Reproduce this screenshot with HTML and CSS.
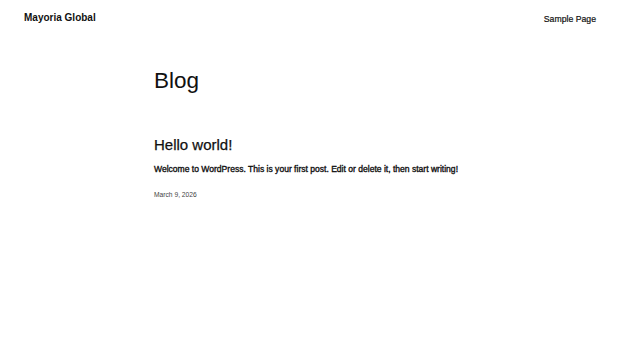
FILE: index.html
```html
<!DOCTYPE html>
<html lang="en">

<head>
    <meta charset="UTF-8">
    <title>Blog – Mayoria Global</title>
    <link rel="stylesheet" href="styles.css">
</head>

<body>

    <header class="site-header">
        <a class="site-title" href="#">Mayoria Global</a>
        <nav class="site-nav">
            <a href="#">Sample Page</a>
        </nav>
    </header>

    <main class="site-main">
        <h1 class="page-title">Blog</h1>

        <article class="post">
            <h2 class="post-title"><a href="#">Hello world!</a></h2>
            <p class="post-excerpt">Welcome to WordPress. This is your first post. Edit or delete it, then start writing!</p>
            <p class="post-date">March 9, 2026</p>
        </article>
    </main>

</body>

</html>
```

FILE: styles.css
```css
body {
    margin: 0;
    font-family: "Liberation Sans", Arial, sans-serif;
    color: #111;
    background: #fff;
}

a {
    color: inherit;
    text-decoration: none;
}

/* 顶部栏 */
.site-header {
    display: flex;
    justify-content: space-between;
    align-items: center;
    height: 34px;
    padding: 0 24px;
}

.site-title {
    font-size: 10px;
    font-weight: bold;
}

.site-nav a {
    font-size: 8.7px;
    -webkit-text-stroke: 0.2px #111;
}

/* 内容区 */
.site-main {
    width: 312px;
    margin: 0 auto;
    padding-top: 33px;
}

.page-title {
    margin: 0;
    font-size: 22.5px;
    font-weight: normal;
    line-height: 28px;
}

.post {
    margin-top: 40px;
}

.post-title {
    margin: 0;
    font-size: 15px;
    font-weight: normal;
    line-height: 20px;
    -webkit-text-stroke: 0.25px #111;
}

.post-excerpt {
    margin: 8px 0 0;
    font-size: 8.55px;
    line-height: 12px;
    -webkit-text-stroke: 0.35px #111;
}

.post-date {
    margin: 16px 0 0;
    font-size: 6.7px;
    color: #444;
}
```
